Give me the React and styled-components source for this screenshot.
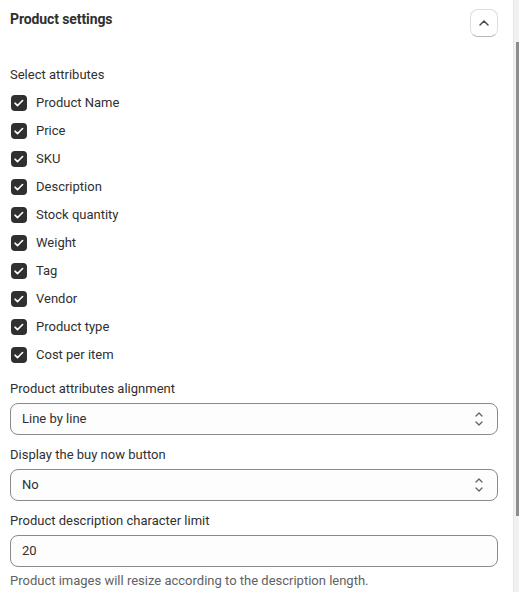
import styled, { createGlobalStyle } from "styled-components";

const attributes = [
  "Product Name",
  "Price",
  "SKU",
  "Description",
  "Stock quantity",
  "Weight",
  "Tag",
  "Vendor",
  "Product type",
  "Cost per item",
];

const GlobalStyle = createGlobalStyle`
  body {
    margin: 0;
    background: #ffffff;
    font-family: Roboto, "Liberation Sans", sans-serif;
    color: #303030;
  }
`;

function CheckIcon() {
  return (
    <svg width="16" height="16" viewBox="0 0 16 16" fill="none">
      <path
        d="M4 8.2 L6.5 10.6 L11.6 5.5"
        stroke="#ffffff"
        strokeWidth="1.6"
        strokeLinecap="round"
        strokeLinejoin="round"
      />
    </svg>
  );
}

function ChevronUp() {
  return (
    <svg width="12" height="8" viewBox="0 0 12 8" fill="none">
      <path
        d="M2 6 L6 2 L10 6"
        stroke="#4a4a4a"
        strokeWidth="1.5"
        strokeLinecap="round"
        strokeLinejoin="round"
      />
    </svg>
  );
}

function SelectArrows() {
  return (
    <svg width="10" height="16" viewBox="0 0 10 16" fill="none">
      <path
        d="M2 5 L5 2 L8 5"
        stroke="#616161"
        strokeWidth="1.3"
        strokeLinecap="round"
        strokeLinejoin="round"
      />
      <path
        d="M2 11 L5 14 L8 11"
        stroke="#616161"
        strokeWidth="1.3"
        strokeLinecap="round"
        strokeLinejoin="round"
      />
    </svg>
  );
}

function App() {
  return (
    <>
      <GlobalStyle />
      <Page>
        <Main>
          <Header>
            <Title>Product settings</Title>
            <IconButton aria-label="Collapse">
              <ChevronUp />
            </IconButton>
          </Header>

          <GroupLabel>Select attributes</GroupLabel>
          <CheckList>
            {attributes.map((name) => (
              <CheckRow key={name}>
                <Box>
                  <CheckIcon />
                </Box>
                <span>{name}</span>
              </CheckRow>
            ))}
          </CheckList>

          <Field>
            <FieldLabel>Product attributes alignment</FieldLabel>
            <SelectBox>
              <span>Line by line</span>
              <SelectArrows />
            </SelectBox>
          </Field>

          <Field>
            <FieldLabel>Display the buy now button</FieldLabel>
            <SelectBox>
              <span>No</span>
              <SelectArrows />
            </SelectBox>
          </Field>

          <Field>
            <FieldLabel>Product description character limit</FieldLabel>
            <InputBox>20</InputBox>
            <HelpText>
              Product images will resize according to the description length.
            </HelpText>
          </Field>
        </Main>
        <ScrollTrack>
          <ScrollThumb />
        </ScrollTrack>
      </Page>
    </>
  );
}

//styling
const Page = styled.div`
  display: flex;
  height: 592px;
  overflow: hidden;
`;
const Main = styled.div`
  flex: 1;
  padding: 9px 15px 0 10px;
  font-size: 13px;
  line-height: 20px;
`;
const Header = styled.div`
  display: flex;
  justify-content: space-between;
  align-items: flex-start;
`;
const Title = styled.h2`
  margin: 0;
  font-size: 14px;
  line-height: 20px;
  font-weight: 700;
  letter-spacing: -0.1px;
  color: #303030;
`;
const IconButton = styled.button`
  display: flex;
  align-items: center;
  justify-content: center;
  width: 28px;
  height: 28px;
  padding: 0;
  background: #ffffff;
  border: 1px solid #dedede;
  border-bottom-color: #b9b9b9;
  border-radius: 8px;
  cursor: pointer;
`;
const GroupLabel = styled.div`
  margin-top: 28px;
`;
const CheckList = styled.div`
  display: flex;
  flex-direction: column;
  margin-top: 4px;
`;
const CheckRow = styled.label`
  display: flex;
  align-items: center;
  gap: 9px;
  height: 28px;
  padding-left: 1px;
`;
const Box = styled.span`
  display: flex;
  width: 16px;
  height: 16px;
  border-radius: 4px;
  background: #303030;
`;
const Field = styled.div`
  display: flex;
  flex-direction: column;
  margin-top: 10px;
`;
const FieldLabel = styled.div`
  margin-bottom: 4px;
`;
const SelectBox = styled.div`
  display: flex;
  align-items: center;
  justify-content: space-between;
  height: 32px;
  box-sizing: border-box;
  padding: 0 13px 0 11px;
  background: #fdfdfd;
  border: 1px solid #8a8a8a;
  border-radius: 8px;
`;
const InputBox = styled(SelectBox)``;
const HelpText = styled.div`
  margin-top: 4px;
  color: #616161;
`;
const ScrollTrack = styled.div`
  display: flex;
  justify-content: flex-end;
  width: 6px;
  background: #f1f1f1;
  border-left: 1px solid #e6e6e6;
  box-sizing: border-box;
`;
const ScrollThumb = styled.div`
  width: 3px;
  height: 474px;
  margin-top: 42px;
  background: #8d8d8d;
`;

export default App;
